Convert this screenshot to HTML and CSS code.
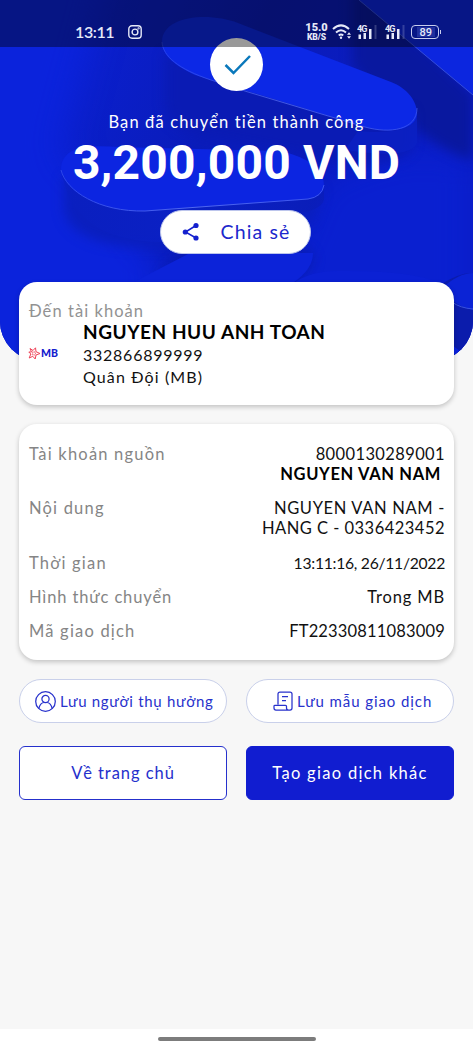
FILE: index.html
```html
<!DOCTYPE html>
<html lang="vi">
<head>
<meta charset="utf-8">
<title>Chuyển tiền thành công</title>
<link rel="stylesheet" href="styles.css">
</head>
<body>
<div class="screen">
  <header class="hero">
    <svg class="art" viewBox="0 0 473 361" preserveAspectRatio="none">
      <defs>
        <linearGradient id="base" x1="0" y1="0" x2="1" y2=".4"><stop offset="0" stop-color="#0b22dc"/><stop offset=".5" stop-color="#0a1cba"/><stop offset="1" stop-color="#0b1cc4"/></linearGradient>
        <linearGradient id="side" x1="0" y1="0" x2="1" y2="0"><stop offset="0" stop-color="#0a1fc0"/><stop offset=".5" stop-color="#0b22cc"/><stop offset="1" stop-color="#0a1cb2"/></linearGradient>
        <linearGradient id="edge" x1="0" y1="0" x2="1" y2="0"><stop offset="0" stop-color="#2b45e8"/><stop offset=".5" stop-color="#5068f0"/><stop offset="1" stop-color="#3a54ee"/></linearGradient>
        <filter id="soft" x="-50%" y="-50%" width="200%" height="200%" color-interpolation-filters="sRGB"><feGaussianBlur stdDeviation="16"/></filter>
        <filter id="dim" x="-50%" y="-50%" width="200%" height="200%" color-interpolation-filters="sRGB"><feGaussianBlur stdDeviation="6"/></filter>
      </defs>
      <rect width="473" height="361" fill="url(#base)"/>
      <path d="M320 180Q420 130 473 160V400H230Z" fill="#0a20d0" filter="url(#soft)"/>
      <path d="M-40 -40H110L60 150L160 260V400H-40Z" fill="#0b23dc" filter="url(#soft)"/>
      <path d="M352 -10H365L473 95V160Q420 145 352 65Z" fill="#09189f" filter="url(#dim)"/>
      <path d="M359 0L473 95V0Z" fill="#0c26df"/>
      <path d="M359 0L473 95" stroke="#354edc" fill="none"/>
      <path d="M165 54V105Q170 135 225 140L360 165Q410 160 412 145V112Z" fill="#0a1bb4" filter="url(#dim)"/>
      <path d="M358 131Q416 136 417 113V143Q410 160 345 150Z" fill="#0b20c4" opacity=".8"/>
      <path d="M162 42C162 15 210 12 238 23L391 82C407 88 417 101 417 113C417 130 390 134 365 127L195 75C176 66 162 56 162 42Z" fill="#0c28e6"/>
      <path d="M162 42C163 56 178 69 211 80L248 92L365 127C390 134 417 130 417 108" stroke="url(#edge)" stroke-width=".8" fill="none"/>
      <path d="M64 178V210Q70 240 125 246L230 250L312 220L322 190Z" fill="#0a1fbe" filter="url(#dim)"/>
      <path d="M61 168Q67 204 135 211L310 199Q323 196 324 188V200Q320 212 290 214L160 242Q70 240 61 168Z" fill="url(#side)" opacity=".5"/>
      <path d="M61 168C63 145 90 145 120 147L280 151Q324 161 324 185Q323 196 308 199L145 211C95 212 62 188 61 168Z" fill="#0c25e1"/>
      <path d="M61 170C66 191 99 212 145 211L308 199Q322 197 324 185" stroke="url(#edge)" fill="none"/>
      <path d="M160 282Q165 250 240 242Q315 238 314 260Q311 274 290 285Z" fill="#091ba9" filter="url(#dim)" opacity=".6"/>
      <path d="M134 282L190 253H313Q313 269 294 282Z" fill="#0c23d9"/>
      <path d="M294 283Q310 271 338 271Q410 270 440 283Z" fill="#0b21d4"/>
      <path d="M440 285Q460 272 473 273V361H440Z" fill="#0b1cac"/>
      <path d="M442 288Q459 273 473 273V310Q453 306 442 288Z" fill="#0b23d5"/>
      <path d="M452 302Q460 308 473 309" stroke="#3a52de" fill="none"/>
      <path d="M452 345L473 361H440Z" fill="#0b23e0"/>
    </svg>
    <div class="badge"><svg width="53" height="53" viewBox="0 0 53 53"><path d="M15.5 27L23.5 35L40 18" fill="none" stroke="#0a78bb" stroke-width="2.5"/></svg></div>
    <p class="subtitle">Bạn đã chuyển tiền thành công</p>
    <h1 class="amount">3,200,000 VND</h1>
    <button class="share"><svg width="18" height="20" viewBox="0 0 18 20"><path d="M14 3.500L3.500 10L14 16" fill="none" stroke="#1420ce" stroke-width="1.500"/><g fill="#1420ce"><circle cx="14" cy="3.500" r="2.600"/><circle cx="3.300" cy="10" r="2.600"/><circle cx="14" cy="16" r="2.600"/></g></svg><span>Chia sẻ</span></button>
  </header>

  <div class="status">
    <span class="clock">13:11</span>
    <svg class="insta" width="14" height="14" viewBox="0 0 14 14" fill="none" stroke="#e6e9f8" stroke-width="1.400"><rect x=".8" y=".8" width="12.400" height="12.400" rx="3.200"/><circle cx="7" cy="7" r="2.900"/><circle cx="10.600" cy="3.400" r=".4"/></svg>
    <div class="rate"><b>15.0</b><b class="unit">KB/S</b></div>
    <svg class="wifi" width="20" height="16" viewBox="0 0 20 16" fill="none" stroke="#e6e9f8" stroke-width="2"><path d="M1 5Q9 -2.200 17 5"/><path d="M4 8.500Q9 4 14 8.500"/><path d="M6.800 11.500Q9 9.500 11.200 11.500"/><circle cx="9" cy="13.700" r="1.200" fill="#e6e9f8" stroke="none"/><path d="M15 10.700L17 8.300L19 10.700ZM15 12.300L17 14.700L19 12.300Z" fill="#e6e9f8" stroke="none"/></svg>
    <svg class="sig" width="20" height="16" viewBox="0 0 20 16" fill="#e6e9f8"><text x="0" y="7.500" class="gen">4G</text><path d="M1.500 10.500H4V15H1.500ZM6.500 9H9V15H6.500ZM12 5H14.500V15H12Z"/><path d="M17.500 1H19.500V15H17.500Z" opacity=".2"/></svg>
    <svg class="sig" width="20" height="16" viewBox="0 0 20 16" fill="#e6e9f8"><text x="0" y="7.500" class="gen">4G</text><path d="M1.500 10.500H4V15H1.500ZM6.500 9H9V15H6.500ZM12 5H14.500V15H12Z"/><path d="M17.500 1H19.500V15H17.500Z" opacity=".2"/></svg>
    <div class="battery"><span>89</span><i></i></div>
  </div>

  <main class="content">
    <section class="card recipient">
      <p class="label">Đến tài khoản</p>
      <div class="bank-row">
        <div class="logo"><svg width="13" height="13" viewBox="0 0 13 13"><path d="M2 1.500L5 3.500L7.500 .8L8 4.700L12 6.500L8 8L7.200 12L4.800 9.300L1.200 11L2.800 7L.8 5L3.500 5Z" fill="none" stroke="#ee4358" stroke-width="1"/><path d="M4.300 4.800L6 5.200L7 4.500L6.900 6L8 6.600L6.700 7.300L6.300 8.500L5.200 7.500L4 8L4.600 6.500Z" fill="none" stroke="#ee4358" stroke-width=".6"/></svg><b>MB</b></div>
        <div class="dest">
          <strong class="to-name">NGUYEN HUU ANH TOAN</strong>
          <p class="line acct">332866899999</p>
          <p class="line bank">Quân Đội (MB)</p>
        </div>
      </div>
    </section>

    <section class="card details">
      <div class="row"><span class="key">Tài khoản nguồn</span><div class="val"><p class="number">8000130289001</p><p class="owner">NGUYEN VAN NAM</p></div></div>
      <div class="row"><span class="key">Nội dung</span><div class="val message"><p>NGUYEN VAN NAM -</p><p class="second">HANG C - 0336423452</p></div></div>
      <div class="row"><span class="key">Thời gian</span><div class="val time">13:11:16, 26/11/2022</div></div>
      <div class="row"><span class="key method">Hình thức chuyển</span><div class="val channel">Trong MB</div></div>
      <div class="row"><span class="key">Mã giao dịch</span><div class="val code">FT22330811083009</div></div>
    </section>

    <div class="pair saves">
      <button class="pill"><svg width="21" height="21" viewBox="0 0 21 21" fill="none" stroke="#2832cc" stroke-width="1.250"><circle cx="10.500" cy="10.500" r="9.800"/><circle cx="10.500" cy="8" r="3.600"/><path d="M3.800 17.500Q5 12.300 8.700 11.500M17.200 17.500Q16 12.300 12.300 11.500"/></svg><span>Lưu người thụ hưởng</span></button>
      <button class="pill template"><svg width="20" height="20" viewBox="0 0 20 20" fill="none" stroke="#2832cc" stroke-width="1.250"><path d="M5 13.500V3Q5 1 7 1H17Q19 1 19 3V17Q19 19 17 19H3Q1 19 1 17V15Q1 14.300 2 14.300H12.500Q13.500 14.300 13.500 15.300V17Q13.500 19 15.500 19M9 5.500H15M9 9.500H13"/></svg><span>Lưu mẫu giao dịch</span></button>
    </div>
    <div class="pair actions">
      <button class="action">Về trang chủ</button>
      <button class="action primary">Tạo giao dịch khác</button>
    </div>
  </main>
  <footer class="nav"><i></i></footer>
</div>
</body>
</html>
```
FILE: styles.css
```css
* { box-sizing: border-box; }
body { margin: 0; font-family: Lato, "Noto Sans", sans-serif; color: #111; }
p, h1 { margin: 0; }
button { font: inherit; padding: 0; margin: 0; }
svg { display: block; flex: none; }
.screen { position: relative; width: 473px; height: 1050px; display: flex; flex-direction: column; background: #f7f7f7; overflow: hidden; }
.hero { position: relative; height: 361px; flex: none; margin-bottom: -79px; padding-top: 38px; border-radius: 0 0 40px 40px; overflow: hidden; display: flex; flex-direction: column; align-items: center; color: #fff; background: #0b21d2; }
.art { position: absolute; inset: 0; width: 100%; height: 100%; }
.badge, .subtitle, .amount, .share { position: relative; }
.badge { width: 53px; height: 53px; border-radius: 50%; background: #fff; }
.subtitle { margin-top: 21px; font-size: 16.5px; line-height: 20px; letter-spacing: 1.13px; white-space: nowrap; }
.amount { margin-top: 6px; font: 700 48px/50px Roboto, sans-serif; letter-spacing: .19px; white-space: nowrap; }
.share { margin-top: 22px; width: 151px; height: 44px; margin-right: 3px; border: 1.5px solid #bcc5ec; border-radius: 22px; background: #fff; color: #1c28cc; display: flex; align-items: center; padding-left: 21px; gap: 21px; font-size: 19.5px; letter-spacing: 1.15px; }
.share span { padding-bottom: 2px; }
.status { position: absolute; inset: 0 0 auto; height: 47px; background: rgba(0, 0, 0, .4); display: flex; align-items: center; padding: 16px 34px 0 75px; color: #e6e9f8; }
.clock { font-size: 16px; line-height: 20px; font-weight: 600; letter-spacing: -.4px; }
.insta { margin-left: 14px; }
.rate { margin-left: auto; display: flex; flex-direction: column; align-items: center; width: 21px; font: 700 11px/10px Roboto, sans-serif; }
.rate .unit { font-size: 8.5px; line-height: 8px; }
.wifi { margin-left: 5px; }
.sig { margin-left: 5px; }
.sig + .sig { margin-left: 8px; }
.gen { font: 700 9px Roboto, sans-serif; letter-spacing: -.9px; }
.battery { margin-left: 6px; width: 28px; height: 14px; border: 1px solid #c8cdee; border-radius: 4px; font: 500 11px/12px Roboto, sans-serif; display: flex; align-items: center; justify-content: center; }
.battery span { width: 18px; flex: none; text-align: center; background: rgba(80, 95, 200, .35); margin-left: 4px; height: 10px; line-height: 11px; }
.battery i { flex: none; width: 1.5px; height: 4px; margin: 0 -4px 0 5px; background: #c8cdee; }
.content { position: relative; padding: 0 19px; }
.card { background: #fff; border-radius: 18px; box-shadow: 0 2px 5px rgba(0, 0, 0, .22); white-space: nowrap; }
.recipient { height: 123px; padding: 19px 10px 0; }
.label { font-size: 16.5px; line-height: 20px; letter-spacing: 1.06px; color: #929292; }
.bank-row { display: flex; gap: 26px; }
.logo { display: flex; align-items: center; width: 28px; height: 24px; margin-top: 20px; margin-left: -1px; color: #1420ce; font: 900 10.5px/12px Lato, sans-serif; }
.dest { padding-left: 1px; }
.to-name { display: block; font-size: 19px; line-height: 22px; padding-bottom: 1px; letter-spacing: .55px; color: #000; }
.line { font-size: 16px; line-height: 22px; }
.acct { letter-spacing: .75px; }
.bank { letter-spacing: 1.13px; }
.details { margin-top: 19px; height: 236px; padding: 20px 9px 0 10px; display: flex; flex-direction: column; gap: 14.3px; font-size: 16.5px; line-height: 20px; }
.row { display: flex; justify-content: space-between; }
.key { color: #858585; letter-spacing: 1.2px; }
.method { letter-spacing: .87px; }
.val { text-align: right; color: #111; }
.number { letter-spacing: .38px; }
.owner { font-weight: 700; letter-spacing: .65px; padding-right: 4px; color: #000; }
.message { letter-spacing: .66px; }
.second { letter-spacing: .48px; }
.time { font-size: 15.7px; letter-spacing: -.28px; }
.channel { letter-spacing: .85px; }
.code { letter-spacing: .17px; }
.pair { display: grid; grid-template-columns: 208px 208px; gap: 19px; }
.saves { margin-top: 19px; }
.actions { margin-top: 23px; }
.pill { height: 44px; border: 1.5px solid #c9d0ea; border-radius: 22px; background: #fff; color: #2832cc; display: flex; align-items: center; padding-left: 15px; gap: 4px; font-size: 15px; letter-spacing: .7px; white-space: nowrap; }
.template { padding-left: 26px; letter-spacing: .91px; }
.action { height: 54px; border: 1.5px solid #2530cc; border-radius: 6px; background: #fff; color: #2530cc; font-size: 16.5px; letter-spacing: .95px; white-space: nowrap; padding-bottom: 1px; }
.primary { background: #111dd0; border-color: #111dd0; color: #fff; letter-spacing: 1.3px; }
.nav { margin-top: auto; height: 21px; background: #fff; display: flex; justify-content: center; padding-top: 8px; }
.nav i { width: 158px; height: 4px; border-radius: 2px; background: #7c7c7c; }
```
